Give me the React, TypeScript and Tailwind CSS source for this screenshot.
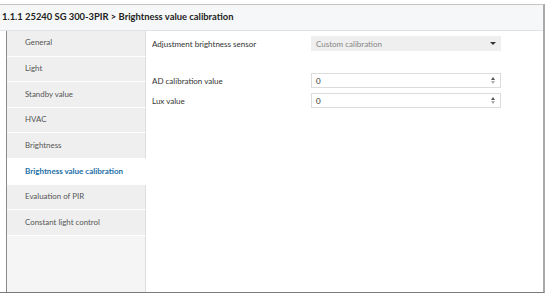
import * as React from "react";

const items = [
  "General",
  "Light",
  "Standby value",
  "HVAC",
  "Brightness",
  "Brightness value calibration",
  "Evaluation of PIR",
  "Constant light control",
];

const active = "Brightness value calibration";

const NumberField: React.FC<{ value: string }> = ({ value }) => {
  return (
    <div className="flex h-[15px] w-[190px] items-center justify-between border border-[#dcdcdc] bg-white pl-[4px] pr-[5px]">
      <span className="text-[8px] text-[#333]">{value}</span>
      <div className="flex flex-col items-center gap-[1px]">
        <span className="h-0 w-0 border-x-[2px] border-b-[3px] border-x-transparent border-b-[#555]" />
        <span className="h-0 w-0 border-x-[2px] border-t-[3px] border-x-transparent border-t-[#aaa]" />
      </div>
    </div>
  );
};

export default function App() {
  return (
    <div
      className="relative h-[293px] w-[550px] overflow-hidden bg-white"
      style={{ fontFamily: 'Lato, "Noto Sans", sans-serif' }}
    >
      <div className="mt-[4px] flex h-[289px] w-[545px] flex-col border-t border-r-2 border-b border-t-[#c4c4c4] border-r-[#a9a9a9] border-b-[#7a7a7a]">
        {/* header */}
        <div className="flex h-[26px] shrink-0 items-center border-b border-[#e2e2e2] bg-[#f6f7f8] pl-[2px]">
          <span className="text-[9.4px] font-bold text-[#222]">
            1.1.1 25240 SG 300-3PIR &gt; Brightness value calibration
          </span>
        </div>

        <div className="flex min-h-0 flex-1">
          {/* sidebar */}
          <div className="ml-[6px] flex w-[140px] shrink-0 flex-col border-l border-[#8a8a8a] bg-[#f4f4f4]">
            {items.map((item) => {
              const isActive = item === active;
              return (
                <div
                  key={item}
                  className={
                    isActive
                      ? "flex h-[25.6px] items-center border-b border-white bg-white pl-[18px] text-[8px] font-bold text-[#1b6ea6]"
                      : "flex h-[25.6px] items-center border-r border-b border-r-[#dedede] border-b-white bg-[#efefef] pl-[18px] text-[7.9px] text-[#555]"
                  }
                >
                  {item}
                </div>
              );
            })}
            <div className="flex-1 border-r border-[#dedede] bg-[#f5f5f5]" />
          </div>

          {/* content */}
          <div className="flex flex-1 flex-col pt-[5px] pl-[6px]">
            <div className="flex h-[15px] items-center">
              <span className="w-[159px] text-[8px] text-[#333]">
                Adjustment brightness sensor
              </span>
              <div className="flex h-[15px] w-[190px] items-center justify-between bg-[#efefef] pr-[5px] pl-[5px]">
                <span className="text-[8px] text-[#858585]">Custom calibration</span>
                <span className="h-0 w-0 border-x-[3px] border-t-[3px] border-x-transparent border-t-[#333]" />
              </div>
            </div>

            <div className="mt-[22px] flex h-[15px] items-center">
              <span className="w-[159px] text-[8px] text-[#333]">AD calibration value</span>
              <NumberField value="0" />
            </div>

            <div className="mt-[5px] flex h-[15px] items-center">
              <span className="w-[159px] text-[8px] text-[#333]">Lux value</span>
              <NumberField value="0" />
            </div>
          </div>
        </div>
      </div>
    </div>
  );
}
